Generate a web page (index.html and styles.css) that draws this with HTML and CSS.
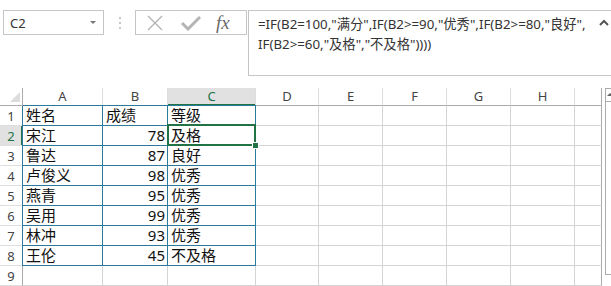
FILE: index.html
```html
<!DOCTYPE html>
<html lang="zh-CN">
  <head>
    <meta charset="UTF-8" />
    <title>成绩等级</title>
    <link rel="stylesheet" href="styles.css">
  </head>
  <body>
    <div class="formula-bar">
      <div class="name-box">
        <span>C2</span>
        <span class="drop"></span>
      </div>
      <div class="grip"><i></i><i></i><i></i></div>
      <div class="fn-box">
        <svg class="ico" width="18" height="16" viewBox="0 0 18 16">
          <path d="M2 1 L16 15 M16 1 L2 15" stroke="#b4b4b4" stroke-width="1.4" fill="none" />
        </svg>
        <svg class="ico" width="20" height="16" viewBox="0 0 20 16">
          <path d="M1 8 L7 14 L19 2" stroke="#b4b4b4" stroke-width="3" fill="none" />
        </svg>
        <span class="fx">fx</span>
      </div>
      <div class="formula">
        =IF(B2=100,"满分",IF(B2&gt;=90,"优秀",IF(B2&gt;=80,"良好",<br />IF(B2&gt;=60,"及格","不及格"))))
        <svg class="collapse" width="10" height="7" viewBox="0 0 10 7">
          <path d="M1 6 L5 2 L9 6" stroke="#555" stroke-width="2" fill="none" />
        </svg>
      </div>
    </div>

    <div class="sheet">
      <div class="grid">
        <div class="corner"></div>
        <div class="h">A</div>
        <div class="h">B</div>
        <div class="h sel">C</div>
        <div class="h">D</div>
        <div class="h">E</div>
        <div class="h">F</div>
        <div class="h">G</div>
        <div class="h">H</div>
        <div class="h last"></div>

        <div class="r">1</div>
        <div class="c t top first">姓名</div>
        <div class="c t top">成绩</div>
        <div class="c t top">等级</div>
        <div class="c"></div><div class="c"></div><div class="c"></div><div class="c"></div><div class="c"></div><div class="c last"></div>

        <div class="r sel">2</div>
        <div class="c t first">宋江</div>
        <div class="c t n">78</div>
        <div class="c t active">及格</div>
        <div class="c"></div><div class="c"></div><div class="c"></div><div class="c"></div><div class="c"></div><div class="c last"></div>

        <div class="r">3</div>
        <div class="c t first">鲁达</div>
        <div class="c t n">87</div>
        <div class="c t">良好</div>
        <div class="c"></div><div class="c"></div><div class="c"></div><div class="c"></div><div class="c"></div><div class="c last"></div>

        <div class="r">4</div>
        <div class="c t first">卢俊义</div>
        <div class="c t n">98</div>
        <div class="c t">优秀</div>
        <div class="c"></div><div class="c"></div><div class="c"></div><div class="c"></div><div class="c"></div><div class="c last"></div>

        <div class="r">5</div>
        <div class="c t first">燕青</div>
        <div class="c t n">95</div>
        <div class="c t">优秀</div>
        <div class="c"></div><div class="c"></div><div class="c"></div><div class="c"></div><div class="c"></div><div class="c last"></div>

        <div class="r">6</div>
        <div class="c t first">吴用</div>
        <div class="c t n">99</div>
        <div class="c t">优秀</div>
        <div class="c"></div><div class="c"></div><div class="c"></div><div class="c"></div><div class="c"></div><div class="c last"></div>

        <div class="r">7</div>
        <div class="c t first">林冲</div>
        <div class="c t n">93</div>
        <div class="c t">优秀</div>
        <div class="c"></div><div class="c"></div><div class="c"></div><div class="c"></div><div class="c"></div><div class="c last"></div>

        <div class="r">8</div>
        <div class="c t first">王伦</div>
        <div class="c t n">45</div>
        <div class="c t">不及格</div>
        <div class="c"></div><div class="c"></div><div class="c"></div><div class="c"></div><div class="c"></div><div class="c last"></div>

        <div class="r">9</div>
        <div class="c"></div><div class="c"></div><div class="c"></div>
        <div class="c"></div><div class="c"></div><div class="c"></div><div class="c"></div><div class="c"></div><div class="c last"></div>
      </div>
      <div class="scroll">
        <div class="arrow"></div>
      </div>
    </div>
  </body>
</html>
```

FILE: styles.css
```css
html,
body {
  margin: 0;
  overflow: hidden;
  background: #fff;
}

body {
  font-family: "Noto Sans", "Noto Sans CJK SC", sans-serif;
  color: #222;
}

/* formula bar */
.formula-bar {
  display: flex;
  align-items: flex-start;
  padding-top: 10px;
  height: 78px;
}

.name-box {
  margin-left: 3px;
  width: 93px;
  height: 23px;
  border: 1px solid #c6c6c6;
  display: flex;
  align-items: center;
  justify-content: space-between;
  padding: 0 6px 0 0;
  font-size: 13px;
  color: #333;
}

.name-box span:first-child {
  padding-left: 6px;
}

.drop {
  width: 0;
  height: 0;
  border-left: 3px solid transparent;
  border-right: 3px solid transparent;
  border-top: 3px solid #777;
  margin-right: 1px;
}

.grip {
  width: 31px;
  height: 25px;
  display: flex;
  flex-direction: column;
  align-items: center;
  justify-content: center;
  gap: 3px;
}

.grip i {
  width: 2px;
  height: 2px;
  background: #c8c8c8;
}

.fn-box {
  width: 100px;
  height: 23px;
  border: 1px solid #c6c6c6;
  display: flex;
  align-items: center;
  padding-left: 10px;
  gap: 17px;
}

.ico {
  display: block;
}

.fx {
  font-family: "Liberation Serif", serif;
  font-style: italic;
  font-size: 19px;
  color: #6b6b6b;
  margin-left: -2px;
}

.formula {
  position: relative;
  flex: 1;
  height: 61px;
  margin-left: 1px;
  margin-right: -3px;
  border: 1px solid #c6c6c6;
  padding: 3px 0 0 9px;
  font-size: 13.3px;
  line-height: 20px;
  color: #333;
  white-space: nowrap;
  overflow: hidden;
}

.collapse {
  position: absolute;
  top: 8px;
  right: 4px;
}

/* sheet */
.sheet {
  display: flex;
  align-items: flex-start;
}

.grid {
  display: grid;
  grid-template-columns: 23px 80px 65px 88px 63px 64px 64px 64px 64px 27px;
  grid-template-rows: 18px repeat(9, 20px);
  width: 602px;
}

.corner {
  position: relative;
  border-right: 1px solid #ababab;
  border-bottom: 1px solid #ababab;
}

.corner::after {
  content: "";
  position: absolute;
  right: 2px;
  bottom: 3px;
  border-left: 10px solid transparent;
  border-bottom: 10px solid #dcdcdc;
}

.h {
  border-right: 1px solid #dedede;
  border-bottom: 1px solid #ababab;
  text-align: center;
  font-size: 13px;
  line-height: 17px;
  color: #444;
}

.h.sel {
  background: #e1e1e1;
  color: #217346;
  border-bottom-color: #217346;
  box-shadow: inset 0 -1px 0 #217346;
}

.h.last {
  border-right: 1px solid #ababab;
}

.r {
  border-right: 1px solid #ababab;
  border-bottom: 1px solid #dedede;
  text-align: center;
  font-size: 13px;
  line-height: 20px;
  color: #444;
}

.r.sel {
  background: #e1e1e1;
  color: #217346;
  border-right-color: #217346;
  box-shadow: inset -1px 0 0 #217346;
}

.c {
  border-right: 1px solid #d4d4d4;
  border-bottom: 1px solid #d4d4d4;
  font-size: 15px;
  line-height: 19px;
  padding: 0 2px 0 3px;
  white-space: nowrap;
  color: #111;
}

.c.last {
  border-right-color: #ababab;
}

.c.t {
  border-color: #2a7a9c;
}

.c.first {
  box-shadow: -1px 0 0 #2a7a9c;
}

.c.top {
  box-shadow: 0 -1px 0 #2a7a9c;
}

.c.top.first {
  box-shadow: -1px 0 0 #2a7a9c, 0 -1px 0 #2a7a9c;
}

.c.n {
  text-align: right;
}

.c.active {
  position: relative;
}

.c.active::after {
  content: "";
  position: absolute;
  top: -2px;
  left: -1px;
  right: -1px;
  bottom: -1px;
  border: 2px solid #217346;
}

.c.active::before {
  content: "";
  position: absolute;
  right: -4px;
  bottom: -4px;
  width: 5px;
  height: 5px;
  background: #217346;
  border: 1px solid #fff;
  z-index: 1;
}

.scroll {
  margin: 0 0 0 3px;
  width: 8px;
  height: 185px;
  border: 1px solid #ababab;
  border-right: none;
}

.arrow {
  height: 12px;
  border-bottom: 1px solid #ababab;
  position: relative;
}

.arrow::after {
  content: "";
  position: absolute;
  left: 1px;
  top: 4px;
  border-left: 3px solid transparent;
  border-right: 3px solid transparent;
  border-bottom: 3px solid #666;
}
```
